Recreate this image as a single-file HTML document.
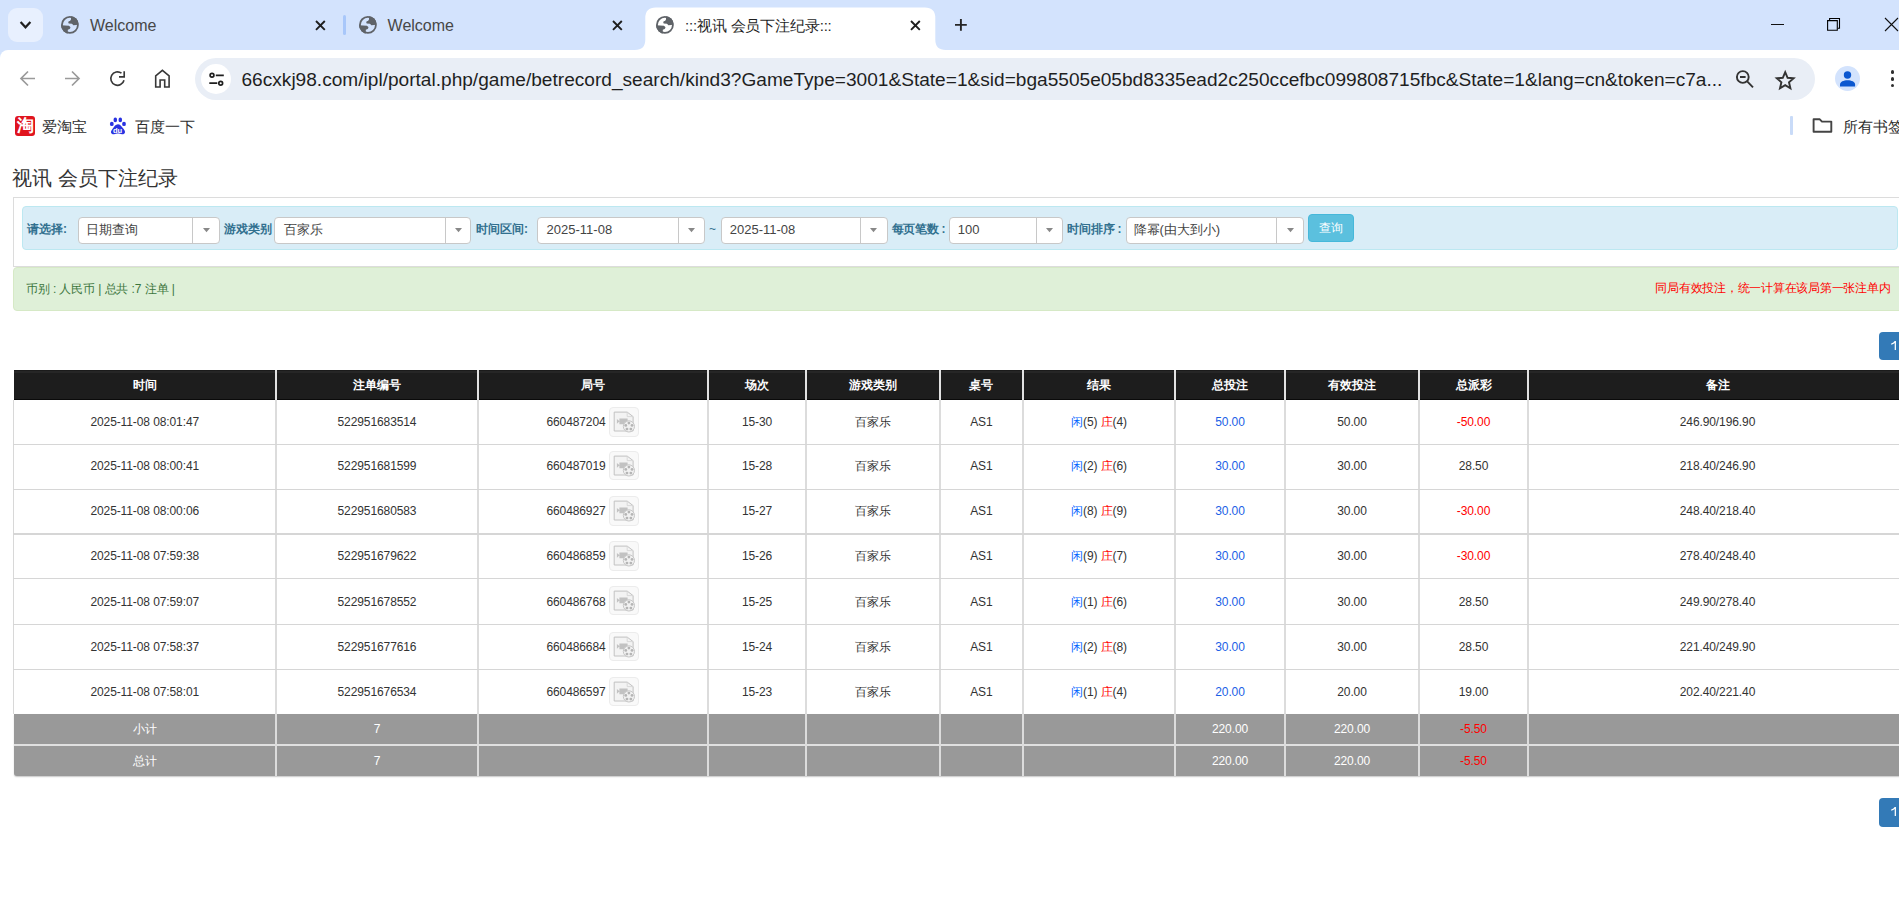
<!DOCTYPE html><html><head><meta charset="utf-8"><title>视讯 会员下注纪录</title><style>
*{margin:0;padding:0;box-sizing:border-box}
html,body{width:1899px;height:918px;overflow:hidden;background:#fff;font-family:"Liberation Sans", sans-serif;}
.a{position:absolute;white-space:nowrap}
.c{text-align:center}
svg{position:absolute;overflow:visible}
</style></head><body><div class="a" style="left:0px;top:0px;width:1899px;height:62px;background:#d3e3fd"></div>
<div class="a" style="left:8px;top:8px;width:34.5px;height:34px;background:#e8f0fe;border-radius:9px"></div>
<svg style="left:0;top:0" width="60" height="50"><path d="M20.6 22 L25.5 27.3 L30.4 22" fill="none" stroke="#1f1f1f" stroke-width="2.2"/></svg>
<svg style="left:61.1px;top:16.1px" width="17.8" height="17.8" viewBox="0 0 17.8 17.8"><defs><clipPath id="gc1"><circle cx="8.9" cy="8.9" r="8.9"/></clipPath></defs><circle cx="8.9" cy="8.9" r="8" fill="none" stroke="#5f6368" stroke-width="1.8"/><g clip-path="url(#gc1)" fill="#5f6368"><path d="M10 0 L10 3.4 Q9.6 5 7.5 5.6 Q6.9 6.8 7.7 7.4 L10.9 7.8 Q11.9 8.4 12.3 9.2 L15.3 9 L18 8.2 L18 0 Z"/><path d="M0 9.3 L7.9 9.8 Q9.5 10.7 9.5 11.7 Q9.2 13.1 6.8 13.8 L6.8 18 L0 18 Z"/></g></svg>
<div class="a" style="left:90px;top:15.3px;font-size:16px;line-height:22px;color:#474747">Welcome</div>
<svg style="left:315.6px;top:20.5px" width="8.8" height="8.8"><path d="M0 0L8.8 8.8M8.8 0L0 8.8" stroke="#1f1f1f" stroke-width="1.9"/></svg>
<div class="a" style="left:343.2px;top:15.2px;width:2.7px;height:20.2px;background:#a8c7fa;border-radius:1.5px"></div>
<svg style="left:359.1px;top:16.1px" width="17.8" height="17.8" viewBox="0 0 17.8 17.8"><defs><clipPath id="gc2"><circle cx="8.9" cy="8.9" r="8.9"/></clipPath></defs><circle cx="8.9" cy="8.9" r="8" fill="none" stroke="#5f6368" stroke-width="1.8"/><g clip-path="url(#gc2)" fill="#5f6368"><path d="M10 0 L10 3.4 Q9.6 5 7.5 5.6 Q6.9 6.8 7.7 7.4 L10.9 7.8 Q11.9 8.4 12.3 9.2 L15.3 9 L18 8.2 L18 0 Z"/><path d="M0 9.3 L7.9 9.8 Q9.5 10.7 9.5 11.7 Q9.2 13.1 6.8 13.8 L6.8 18 L0 18 Z"/></g></svg>
<div class="a" style="left:387.6px;top:15.3px;font-size:16px;line-height:22px;color:#474747">Welcome</div>
<svg style="left:612.9px;top:20.5px" width="8.8" height="8.8"><path d="M0 0L8.8 8.8M8.8 0L0 8.8" stroke="#1f1f1f" stroke-width="1.9"/></svg>
<svg style="left:620px;top:0" width="340" height="50"><path d="M14.8 50 Q25.3 50 25.3 39.5 L25.3 17.9 Q25.3 7.4 35.8 7.4 L304.8 7.4 Q315.3 7.4 315.3 17.9 L315.3 39.5 Q315.3 50 325.8 50 Z" fill="#fff"/></svg>
<svg style="left:656.1px;top:16.1px" width="17.8" height="17.8" viewBox="0 0 17.8 17.8"><defs><clipPath id="gc3"><circle cx="8.9" cy="8.9" r="8.9"/></clipPath></defs><circle cx="8.9" cy="8.9" r="8" fill="none" stroke="#5f6368" stroke-width="1.8"/><g clip-path="url(#gc3)" fill="#5f6368"><path d="M10 0 L10 3.4 Q9.6 5 7.5 5.6 Q6.9 6.8 7.7 7.4 L10.9 7.8 Q11.9 8.4 12.3 9.2 L15.3 9 L18 8.2 L18 0 Z"/><path d="M0 9.3 L7.9 9.8 Q9.5 10.7 9.5 11.7 Q9.2 13.1 6.8 13.8 L6.8 18 L0 18 Z"/></g></svg>
<div class="a" style="left:685px;top:15.3px;font-size:15px;line-height:22px;color:#1f1f1f;letter-spacing:-0.17px">:::视讯 会员下注纪录:::</div>
<svg style="left:910.6px;top:20.5px" width="8.8" height="8.8"><path d="M0 0L8.8 8.8M8.8 0L0 8.8" stroke="#1f1f1f" stroke-width="1.9"/></svg>
<svg style="left:955px;top:19px" width="12" height="12"><path d="M5.9 0V11.8M0 5.85H11.8" stroke="#262626" stroke-width="1.9"/></svg>
<div class="a" style="left:1771px;top:24px;width:13px;height:1.1px;background:#111"></div>
<svg style="left:1826px;top:17px" width="16" height="16"><path d="M1.6 3.6H11.3V13.3H1.6Z" fill="none" stroke="#000" stroke-width="1.1"/><path d="M3.6 3.1V1.5H13.5V11.2H11.8" fill="none" stroke="#000" stroke-width="1.1"/></svg>
<svg style="left:1885px;top:18px" width="14" height="14"><path d="M0 0L13 13M13 0L0 13" stroke="#111" stroke-width="1.1"/></svg>
<div class="a" style="left:0px;top:50px;width:1899px;height:58px;background:#fff;border-top-left-radius:8px"></div>
<svg style="left:0;top:50px" width="200" height="58"><path d="M35 28.5H21.5M28 21.5L21 28.5L28 35.5" fill="none" stroke="#9a9a9a" stroke-width="1.7"/><path d="M65 28.5H78.5M72 21.5L79 28.5L72 35.5" fill="none" stroke="#9a9a9a" stroke-width="1.7"/><path d="M124 30.2 A6.7 6.7 0 1 1 121.5 23.2" fill="none" stroke="#383838" stroke-width="1.65"/><path d="M124.2 21.2V26.8H119" fill="none" stroke="#383838" stroke-width="1.65"/><path d="M155.7 37V25.8L162.4 20.4L169.1 25.8V37H164.7V30H160.1V37Z" fill="none" stroke="#383838" stroke-width="1.6" stroke-linejoin="miter"/></svg>
<div class="a" style="left:195px;top:58px;width:1620px;height:42px;background:#e9eef6;border-radius:21px"></div>
<div class="a" style="left:201px;top:64px;width:30px;height:30px;background:#fff;border-radius:50%"></div>
<svg style="left:200px;top:64px" width="32" height="30"><circle cx="12" cy="11.3" r="1.9" fill="none" stroke="#1f1f1f" stroke-width="1.7"/><path d="M15.8 11.3H23.8M9.3 19.2H17.3" stroke="#1f1f1f" stroke-width="1.8"/><circle cx="20.7" cy="19.2" r="1.9" fill="none" stroke="#1f1f1f" stroke-width="1.7"/></svg>
<div class="a" style="left:241.5px;top:67px;font-size:19.1px;line-height:26px;color:#1f1f1f">66cxkj98.com/ipl/portal.php/game/betrecord_search/kind3?GameType=3001&amp;State=1&amp;sid=bga5505e05bd8335ead2c250ccefbc099808715fbc&amp;State=1&amp;lang=cn&amp;token=c7a...</div>
<svg style="left:1730px;top:64px" width="30" height="30"><circle cx="12.8" cy="13" r="5.9" fill="none" stroke="#333" stroke-width="1.9"/><path d="M10 13H15.6M17.2 17.4L23 23.4" stroke="#333" stroke-width="1.9"/></svg>
<svg style="left:1770px;top:64.8px" width="30" height="30"><path d="M15.2 7.2L17.6 12.8L23.6 13.3L19 17.3L20.4 23.2L15.2 20.1L10 23.2L11.4 17.3L6.8 13.3L12.8 12.8Z" fill="none" stroke="#333" stroke-width="1.9" stroke-linejoin="miter"/></svg>
<div class="a" style="left:1835px;top:65.5px;width:25.4px;height:25.4px;background:#d3e3fd;border-radius:50%"></div>
<svg style="left:1835px;top:65.5px" width="26" height="26"><circle cx="12.5" cy="9" r="3.7" fill="#0b57d0"/><path d="M5 20.4V18.4C5 15.9 8.5 14.3 12.55 14.3C16.6 14.3 20.1 15.9 20.1 18.4V20.4Z" fill="#0b57d0"/></svg>
<div class="a" style="left:1890.7px;top:70.1px;width:3.8px;height:3.8px;background:#2f2f2f;border-radius:50%"></div>
<div class="a" style="left:1890.7px;top:76.89999999999999px;width:3.8px;height:3.8px;background:#2f2f2f;border-radius:50%"></div>
<div class="a" style="left:1890.7px;top:83.69999999999999px;width:3.8px;height:3.8px;background:#2f2f2f;border-radius:50%"></div>
<div class="a" style="left:15px;top:116px;width:20px;height:20px;background:#e0141e;border-radius:3px;color:#fff;font-size:17px;line-height:20px;text-align:center;font-weight:bold">淘</div>
<div class="a" style="left:42px;top:117px;font-size:15px;line-height:20px;color:#2d2d2d">爱淘宝</div>
<svg style="left:104px;top:112px" width="28" height="28"><g fill="#2932e1"><ellipse cx="11.3" cy="7.9" rx="1.8" ry="2.4"/><ellipse cx="16.3" cy="7.9" rx="1.8" ry="2.4"/><ellipse cx="7.8" cy="11.9" rx="1.9" ry="2.2"/><ellipse cx="20" cy="11.9" rx="1.9" ry="2.2"/><path d="M13.9 12.2C11.7 12.2 10.2 14.5 9 16.2C7.8 17.8 6.8 19 7 20.5C7.2 21.8 8.5 22.4 10 22.3C11.5 22.2 12.5 21.6 14 21.6C15.5 21.6 16.5 22.3 18 22.3C19.8 22.3 21 21.5 21 20C21 18.5 20 17.5 18.8 16C17.5 14.4 16.1 12.2 13.9 12.2Z"/></g><text x="13.6" y="20.6" font-size="7.6" fill="#fff" text-anchor="middle" font-family="Liberation Sans" font-weight="bold">du</text></svg>
<div class="a" style="left:135px;top:117px;font-size:15px;line-height:20px;color:#2d2d2d">百度一下</div>
<div class="a" style="left:1790.4px;top:116px;width:2.2px;height:19px;background:#c9dbf8;border-radius:1px"></div>
<svg style="left:1810px;top:116px" width="26" height="20"><path d="M3.6 3.3H9.8L12 5.6H21.3V15.7H3.6Z" fill="none" stroke="#444" stroke-width="1.9" stroke-linejoin="round"/></svg>
<div class="a" style="left:1843px;top:117px;font-size:15px;line-height:20px;color:#2d2d2d">所有书签</div>
<div class="a" style="left:12.4px;top:164px;font-size:20px;line-height:28px;color:#333">视讯 会员下注纪录</div>
<div class="a" style="left:13px;top:197px;width:1950px;height:70px;border:1px solid #dcdcdc;background:#fff"></div>
<div class="a" style="left:22px;top:206.3px;width:1875.5px;height:43.5px;background:#d9edf7;border:1px solid #bce8f1;border-radius:4px"></div>
<div class="a" style="left:27px;top:221px;font-size:12px;line-height:17px;color:#31708f;font-weight:bold">请选择:</div>
<div class="a" style="left:77.5px;top:216.5px;width:142.1px;height:27px;background:#fff;border:1px solid #c8c8c8;border-radius:4px"></div>
<div class="a" style="left:192.4px;top:217.5px;width:1px;height:25px;background:#c8c8c8"></div>
<svg style="left:202.5px;top:227.5px" width="7" height="5"><path d="M0 0H7L3.5 4.2Z" fill="#888"/></svg>
<div class="a" style="left:85.5px;top:221px;font-size:13px;line-height:17px;color:#444">日期查询</div>
<div class="a" style="left:223.5px;top:221px;font-size:12px;line-height:17px;color:#31708f;font-weight:bold">游戏类别</div>
<div class="a" style="left:274.3px;top:216.5px;width:197.2px;height:27px;background:#fff;border:1px solid #c8c8c8;border-radius:4px"></div>
<div class="a" style="left:444.5px;top:217.5px;width:1px;height:25px;background:#c8c8c8"></div>
<svg style="left:454.5px;top:227.5px" width="7" height="5"><path d="M0 0H7L3.5 4.2Z" fill="#888"/></svg>
<div class="a" style="left:284.1px;top:221px;font-size:13px;line-height:17px;color:#444">百家乐</div>
<div class="a" style="left:476px;top:221px;font-size:12px;line-height:17px;color:#31708f;font-weight:bold">时间区间:</div>
<div class="a" style="left:537.4px;top:216.5px;width:168.0px;height:27px;background:#fff;border:1px solid #c8c8c8;border-radius:4px"></div>
<div class="a" style="left:677.5px;top:217.5px;width:1px;height:25px;background:#c8c8c8"></div>
<svg style="left:687.95px;top:227.5px" width="7" height="5"><path d="M0 0H7L3.5 4.2Z" fill="#888"/></svg>
<div class="a" style="left:546.6px;top:221px;font-size:13px;line-height:17px;color:#444">2025-11-08</div>
<div class="a" style="left:709px;top:221px;font-size:12px;line-height:17px;color:#31708f">~</div>
<div class="a" style="left:720.6px;top:216.5px;width:167.0px;height:27px;background:#fff;border:1px solid #c8c8c8;border-radius:4px"></div>
<div class="a" style="left:859.7px;top:217.5px;width:1px;height:25px;background:#c8c8c8"></div>
<svg style="left:870.1500000000001px;top:227.5px" width="7" height="5"><path d="M0 0H7L3.5 4.2Z" fill="#888"/></svg>
<div class="a" style="left:729.8000000000001px;top:221px;font-size:13px;line-height:17px;color:#444">2025-11-08</div>
<div class="a" style="left:891.5px;top:221px;font-size:12px;line-height:17px;color:#31708f;font-weight:bold;letter-spacing:-0.25px">每页笔数 :</div>
<div class="a" style="left:948.5px;top:216.5px;width:114.79999999999995px;height:27px;background:#fff;border:1px solid #c8c8c8;border-radius:4px"></div>
<div class="a" style="left:1035.7px;top:217.5px;width:1px;height:25px;background:#c8c8c8"></div>
<svg style="left:1046.0px;top:227.5px" width="7" height="5"><path d="M0 0H7L3.5 4.2Z" fill="#888"/></svg>
<div class="a" style="left:957.7px;top:221px;font-size:13px;line-height:17px;color:#444">100</div>
<div class="a" style="left:1067.3px;top:221px;font-size:12px;line-height:17px;color:#31708f;font-weight:bold;letter-spacing:-0.25px">时间排序 :</div>
<div class="a" style="left:1125.5px;top:216.5px;width:178.9000000000001px;height:27px;background:#fff;border:1px solid #c8c8c8;border-radius:4px"></div>
<div class="a" style="left:1276.3px;top:217.5px;width:1px;height:25px;background:#c8c8c8"></div>
<svg style="left:1286.85px;top:227.5px" width="7" height="5"><path d="M0 0H7L3.5 4.2Z" fill="#888"/></svg>
<div class="a" style="left:1133.5px;top:221px;font-size:13px;line-height:17px;color:#444">降幂(由大到小)</div>
<div class="a" style="left:1308.1px;top:214px;width:45.6px;height:28px;background:#5bc0de;border:1px solid #46b8da;border-radius:4px;color:#fff;font-size:12px;line-height:26px;text-align:center">查询</div>
<div class="a" style="left:13px;top:267px;width:1950px;height:43.5px;background:#dff0d8;border:1px solid #d6e9c6;border-radius:4px"></div>
<div class="a" style="left:25.9px;top:281px;font-size:12px;line-height:17px;color:#3c763d;letter-spacing:-0.17px;letter-spacing:-0.1px">币别 : 人民币 | 总共 :7 注单 |</div>
<div class="a" style="left:1500px;top:280px;width:390.3px;font-size:12px;line-height:17px;color:#f00;text-align:right;letter-spacing:-0.25px">同局有效投注，统一计算在该局第一张注单内</div>
<div class="a" style="left:1879px;top:332px;width:60px;height:27.9px;background:#337ab7;border-radius:4px 0 0 4px"><svg style="left:12px;top:9px" width="6" height="10"><path d="M3.7 0H4.95V8.9H3.7V1.9Q2.5 3.0 0.2 3.7V2.5Q2.7 1.5 3.7 0Z" fill="#fff"/></svg></div>
<div class="a" style="left:1879px;top:798.3px;width:60px;height:28.4px;background:#337ab7;border-radius:4px 0 0 4px"><svg style="left:12px;top:9px" width="6" height="10"><path d="M3.7 0H4.95V8.9H3.7V1.9Q2.5 3.0 0.2 3.7V2.5Q2.7 1.5 3.7 0Z" fill="#fff"/></svg></div>
<div class="a" style="left:14px;top:370px;width:1885px;height:30px;background:linear-gradient(#1b1b1b 0,#1b1b1b 1px,#262626 1px,#262626 3px,#1d1d1d 3px);border-bottom:1px solid #0a0a0a"></div>
<div class="a" style="left:274.8px;top:370px;width:2.4px;height:30px;background:#e2e2e2"></div>
<div class="a" style="left:476.8px;top:370px;width:2.4px;height:30px;background:#e2e2e2"></div>
<div class="a" style="left:706.8px;top:370px;width:2.4px;height:30px;background:#e2e2e2"></div>
<div class="a" style="left:804.8px;top:370px;width:2.4px;height:30px;background:#e2e2e2"></div>
<div class="a" style="left:938.5px;top:370px;width:2.4px;height:30px;background:#e2e2e2"></div>
<div class="a" style="left:1021.8px;top:370px;width:2.4px;height:30px;background:#e2e2e2"></div>
<div class="a" style="left:1173.8px;top:370px;width:2.4px;height:30px;background:#e2e2e2"></div>
<div class="a" style="left:1283.8px;top:370px;width:2.4px;height:30px;background:#e2e2e2"></div>
<div class="a" style="left:1417.8px;top:370px;width:2.4px;height:30px;background:#e2e2e2"></div>
<div class="a" style="left:1526.8px;top:370px;width:2.4px;height:30px;background:#e2e2e2"></div>
<div class="a c" style="left:13.5px;top:371px;width:262.5px;font-size:12px;line-height:29px;color:#fff;font-weight:bold">时间</div>
<div class="a c" style="left:276px;top:371px;width:202px;font-size:12px;line-height:29px;color:#fff;font-weight:bold">注单编号</div>
<div class="a c" style="left:478px;top:371px;width:230px;font-size:12px;line-height:29px;color:#fff;font-weight:bold">局号</div>
<div class="a c" style="left:708px;top:371px;width:98px;font-size:12px;line-height:29px;color:#fff;font-weight:bold">场次</div>
<div class="a c" style="left:806px;top:371px;width:133.70000000000005px;font-size:12px;line-height:29px;color:#fff;font-weight:bold">游戏类别</div>
<div class="a c" style="left:939.7px;top:371px;width:83.29999999999995px;font-size:12px;line-height:29px;color:#fff;font-weight:bold">桌号</div>
<div class="a c" style="left:1023px;top:371px;width:152px;font-size:12px;line-height:29px;color:#fff;font-weight:bold">结果</div>
<div class="a c" style="left:1175px;top:371px;width:110px;font-size:12px;line-height:29px;color:#fff;font-weight:bold">总投注</div>
<div class="a c" style="left:1285px;top:371px;width:134px;font-size:12px;line-height:29px;color:#fff;font-weight:bold">有效投注</div>
<div class="a c" style="left:1419px;top:371px;width:109px;font-size:12px;line-height:29px;color:#fff;font-weight:bold">总派彩</div>
<div class="a c" style="left:1528px;top:371px;width:379px;font-size:12px;line-height:29px;color:#fff;font-weight:bold">备注</div>
<div class="a" style="left:13px;top:400px;width:1px;height:313.70000000000005px;background:#d8d8d8"></div>
<div class="a" style="left:275px;top:400px;width:2px;height:313.70000000000005px;background:#dcdcdc"></div>
<div class="a" style="left:477px;top:400px;width:2px;height:313.70000000000005px;background:#dcdcdc"></div>
<div class="a" style="left:707px;top:400px;width:2px;height:313.70000000000005px;background:#dcdcdc"></div>
<div class="a" style="left:805px;top:400px;width:2px;height:313.70000000000005px;background:#dcdcdc"></div>
<div class="a" style="left:938.7px;top:400px;width:2px;height:313.70000000000005px;background:#dcdcdc"></div>
<div class="a" style="left:1022px;top:400px;width:2px;height:313.70000000000005px;background:#dcdcdc"></div>
<div class="a" style="left:1174px;top:400px;width:2px;height:313.70000000000005px;background:#dcdcdc"></div>
<div class="a" style="left:1284px;top:400px;width:2px;height:313.70000000000005px;background:#dcdcdc"></div>
<div class="a" style="left:1418px;top:400px;width:2px;height:313.70000000000005px;background:#dcdcdc"></div>
<div class="a" style="left:1527px;top:400px;width:2px;height:313.70000000000005px;background:#dcdcdc"></div>
<div class="a" style="left:13px;top:443.9px;width:1886px;height:1.3px;background:#d6d6d6"></div>
<div class="a" style="left:13px;top:488.59999999999997px;width:1886px;height:1.3px;background:#d6d6d6"></div>
<div class="a" style="left:13px;top:533.4px;width:1886px;height:1.3px;background:#d6d6d6"></div>
<div class="a" style="left:13px;top:578.0px;width:1886px;height:1.3px;background:#d6d6d6"></div>
<div class="a" style="left:13px;top:624.1px;width:1886px;height:1.3px;background:#d6d6d6"></div>
<div class="a" style="left:13px;top:668.9px;width:1886px;height:1.3px;background:#d6d6d6"></div>
<div class="a c" style="left:13.5px;top:400px;width:262.5px;font-size:12px;line-height:44.5px;color:#333;letter-spacing:-0.1px">2025-11-08 08:01:47</div>
<div class="a c" style="left:276px;top:400px;width:202px;font-size:12px;line-height:44.5px;color:#333;letter-spacing:-0.1px">522951683514</div>
<div class="a" style="left:478px;top:400px;width:127.60000000000002px;font-size:12px;line-height:44.5px;color:#333;text-align:right;letter-spacing:-0.1px">660487204</div>
<div class="a" style="left:609.2px;top:407.1px;width:29.5px;height:29.5px;background:#f9f9f9;border:1px solid #ececec;border-radius:4px"><svg width="29.5" height="29.5" viewBox="0 0 29.5 29.5" style="position:absolute;left:-1px;top:-1px"><path d="M5.2 5.1H18.2L24.1 9.6V24H5.2Z" fill="#f3f3f3" stroke="#c2c2c2" stroke-width="1"/><path d="M18.2 5.1V9.6H24.1" fill="none" stroke="#d5d5d5" stroke-width="0.9"/><path d="M10.4 11.5H18.6V17.2H10.4Z M7.9 11.9L10.6 14.35L7.9 16.8Z" fill="#c2c2c2"/><circle cx="19.9" cy="19.4" r="5.6" fill="#f1f1f1" stroke="#c6c6c6" stroke-width="1"/><circle cx="19.90" cy="16.10" r="1.4" fill="#b5b5b5"/><circle cx="23.04" cy="18.38" r="1.4" fill="#b5b5b5"/><circle cx="21.84" cy="22.07" r="1.4" fill="#b5b5b5"/><circle cx="17.96" cy="22.07" r="1.4" fill="#b5b5b5"/><circle cx="16.76" cy="18.38" r="1.4" fill="#b5b5b5"/></svg></div>
<div class="a c" style="left:708px;top:400px;width:98px;font-size:12px;line-height:44.5px;color:#333;letter-spacing:-0.1px">15-30</div>
<div class="a c" style="left:806px;top:400px;width:133.70000000000005px;font-size:12px;line-height:44.5px;color:#333">百家乐</div>
<div class="a c" style="left:939.7px;top:400px;width:83.29999999999995px;font-size:12px;line-height:44.5px;color:#333;letter-spacing:-0.1px">AS1</div>
<div class="a c" style="left:1023px;top:400px;width:152px;font-size:12px;line-height:44.5px;color:#333;letter-spacing:-0.1px"><span style="color:#0063ff">闲</span>(5) <span style="color:#f00">庄</span>(4)</div>
<div class="a c" style="left:1175px;top:400px;width:110px;font-size:12px;line-height:44.5px;color:#1c5fe6;letter-spacing:-0.1px">50.00</div>
<div class="a c" style="left:1285px;top:400px;width:134px;font-size:12px;line-height:44.5px;color:#333;letter-spacing:-0.1px">50.00</div>
<div class="a c" style="left:1419px;top:400px;width:109px;font-size:12px;line-height:44.5px;color:#f00;letter-spacing:-0.1px">-50.00</div>
<div class="a c" style="left:1528px;top:400px;width:379px;font-size:12px;line-height:44.5px;color:#333;letter-spacing:-0.1px">246.90/196.90</div>
<div class="a c" style="left:13.5px;top:443.8px;width:262.5px;font-size:12px;line-height:44.69999999999999px;color:#333;letter-spacing:-0.1px">2025-11-08 08:00:41</div>
<div class="a c" style="left:276px;top:443.8px;width:202px;font-size:12px;line-height:44.69999999999999px;color:#333;letter-spacing:-0.1px">522951681599</div>
<div class="a" style="left:478px;top:443.8px;width:127.60000000000002px;font-size:12px;line-height:44.69999999999999px;color:#333;text-align:right;letter-spacing:-0.1px">660487019</div>
<div class="a" style="left:609.2px;top:450.90000000000003px;width:29.5px;height:29.5px;background:#f9f9f9;border:1px solid #ececec;border-radius:4px"><svg width="29.5" height="29.5" viewBox="0 0 29.5 29.5" style="position:absolute;left:-1px;top:-1px"><path d="M5.2 5.1H18.2L24.1 9.6V24H5.2Z" fill="#f3f3f3" stroke="#c2c2c2" stroke-width="1"/><path d="M18.2 5.1V9.6H24.1" fill="none" stroke="#d5d5d5" stroke-width="0.9"/><path d="M10.4 11.5H18.6V17.2H10.4Z M7.9 11.9L10.6 14.35L7.9 16.8Z" fill="#c2c2c2"/><circle cx="19.9" cy="19.4" r="5.6" fill="#f1f1f1" stroke="#c6c6c6" stroke-width="1"/><circle cx="19.90" cy="16.10" r="1.4" fill="#b5b5b5"/><circle cx="23.04" cy="18.38" r="1.4" fill="#b5b5b5"/><circle cx="21.84" cy="22.07" r="1.4" fill="#b5b5b5"/><circle cx="17.96" cy="22.07" r="1.4" fill="#b5b5b5"/><circle cx="16.76" cy="18.38" r="1.4" fill="#b5b5b5"/></svg></div>
<div class="a c" style="left:708px;top:443.8px;width:98px;font-size:12px;line-height:44.69999999999999px;color:#333;letter-spacing:-0.1px">15-28</div>
<div class="a c" style="left:806px;top:443.8px;width:133.70000000000005px;font-size:12px;line-height:44.69999999999999px;color:#333">百家乐</div>
<div class="a c" style="left:939.7px;top:443.8px;width:83.29999999999995px;font-size:12px;line-height:44.69999999999999px;color:#333;letter-spacing:-0.1px">AS1</div>
<div class="a c" style="left:1023px;top:443.8px;width:152px;font-size:12px;line-height:44.69999999999999px;color:#333;letter-spacing:-0.1px"><span style="color:#0063ff">闲</span>(2) <span style="color:#f00">庄</span>(6)</div>
<div class="a c" style="left:1175px;top:443.8px;width:110px;font-size:12px;line-height:44.69999999999999px;color:#1c5fe6;letter-spacing:-0.1px">30.00</div>
<div class="a c" style="left:1285px;top:443.8px;width:134px;font-size:12px;line-height:44.69999999999999px;color:#333;letter-spacing:-0.1px">30.00</div>
<div class="a c" style="left:1419px;top:443.8px;width:109px;font-size:12px;line-height:44.69999999999999px;color:#333;letter-spacing:-0.1px">28.50</div>
<div class="a c" style="left:1528px;top:443.8px;width:379px;font-size:12px;line-height:44.69999999999999px;color:#333;letter-spacing:-0.1px">218.40/246.90</div>
<div class="a c" style="left:13.5px;top:489.2px;width:262.5px;font-size:12px;line-height:44.80000000000001px;color:#333;letter-spacing:-0.1px">2025-11-08 08:00:06</div>
<div class="a c" style="left:276px;top:489.2px;width:202px;font-size:12px;line-height:44.80000000000001px;color:#333;letter-spacing:-0.1px">522951680583</div>
<div class="a" style="left:478px;top:489.2px;width:127.60000000000002px;font-size:12px;line-height:44.80000000000001px;color:#333;text-align:right;letter-spacing:-0.1px">660486927</div>
<div class="a" style="left:609.2px;top:496.3px;width:29.5px;height:29.5px;background:#f9f9f9;border:1px solid #ececec;border-radius:4px"><svg width="29.5" height="29.5" viewBox="0 0 29.5 29.5" style="position:absolute;left:-1px;top:-1px"><path d="M5.2 5.1H18.2L24.1 9.6V24H5.2Z" fill="#f3f3f3" stroke="#c2c2c2" stroke-width="1"/><path d="M18.2 5.1V9.6H24.1" fill="none" stroke="#d5d5d5" stroke-width="0.9"/><path d="M10.4 11.5H18.6V17.2H10.4Z M7.9 11.9L10.6 14.35L7.9 16.8Z" fill="#c2c2c2"/><circle cx="19.9" cy="19.4" r="5.6" fill="#f1f1f1" stroke="#c6c6c6" stroke-width="1"/><circle cx="19.90" cy="16.10" r="1.4" fill="#b5b5b5"/><circle cx="23.04" cy="18.38" r="1.4" fill="#b5b5b5"/><circle cx="21.84" cy="22.07" r="1.4" fill="#b5b5b5"/><circle cx="17.96" cy="22.07" r="1.4" fill="#b5b5b5"/><circle cx="16.76" cy="18.38" r="1.4" fill="#b5b5b5"/></svg></div>
<div class="a c" style="left:708px;top:489.2px;width:98px;font-size:12px;line-height:44.80000000000001px;color:#333;letter-spacing:-0.1px">15-27</div>
<div class="a c" style="left:806px;top:489.2px;width:133.70000000000005px;font-size:12px;line-height:44.80000000000001px;color:#333">百家乐</div>
<div class="a c" style="left:939.7px;top:489.2px;width:83.29999999999995px;font-size:12px;line-height:44.80000000000001px;color:#333;letter-spacing:-0.1px">AS1</div>
<div class="a c" style="left:1023px;top:489.2px;width:152px;font-size:12px;line-height:44.80000000000001px;color:#333;letter-spacing:-0.1px"><span style="color:#0063ff">闲</span>(8) <span style="color:#f00">庄</span>(9)</div>
<div class="a c" style="left:1175px;top:489.2px;width:110px;font-size:12px;line-height:44.80000000000001px;color:#1c5fe6;letter-spacing:-0.1px">30.00</div>
<div class="a c" style="left:1285px;top:489.2px;width:134px;font-size:12px;line-height:44.80000000000001px;color:#333;letter-spacing:-0.1px">30.00</div>
<div class="a c" style="left:1419px;top:489.2px;width:109px;font-size:12px;line-height:44.80000000000001px;color:#f00;letter-spacing:-0.1px">-30.00</div>
<div class="a c" style="left:1528px;top:489.2px;width:379px;font-size:12px;line-height:44.80000000000001px;color:#333;letter-spacing:-0.1px">248.40/218.40</div>
<div class="a c" style="left:13.5px;top:534px;width:262.5px;font-size:12px;line-height:44.60000000000002px;color:#333;letter-spacing:-0.1px">2025-11-08 07:59:38</div>
<div class="a c" style="left:276px;top:534px;width:202px;font-size:12px;line-height:44.60000000000002px;color:#333;letter-spacing:-0.1px">522951679622</div>
<div class="a" style="left:478px;top:534px;width:127.60000000000002px;font-size:12px;line-height:44.60000000000002px;color:#333;text-align:right;letter-spacing:-0.1px">660486859</div>
<div class="a" style="left:609.2px;top:541.1px;width:29.5px;height:29.5px;background:#f9f9f9;border:1px solid #ececec;border-radius:4px"><svg width="29.5" height="29.5" viewBox="0 0 29.5 29.5" style="position:absolute;left:-1px;top:-1px"><path d="M5.2 5.1H18.2L24.1 9.6V24H5.2Z" fill="#f3f3f3" stroke="#c2c2c2" stroke-width="1"/><path d="M18.2 5.1V9.6H24.1" fill="none" stroke="#d5d5d5" stroke-width="0.9"/><path d="M10.4 11.5H18.6V17.2H10.4Z M7.9 11.9L10.6 14.35L7.9 16.8Z" fill="#c2c2c2"/><circle cx="19.9" cy="19.4" r="5.6" fill="#f1f1f1" stroke="#c6c6c6" stroke-width="1"/><circle cx="19.90" cy="16.10" r="1.4" fill="#b5b5b5"/><circle cx="23.04" cy="18.38" r="1.4" fill="#b5b5b5"/><circle cx="21.84" cy="22.07" r="1.4" fill="#b5b5b5"/><circle cx="17.96" cy="22.07" r="1.4" fill="#b5b5b5"/><circle cx="16.76" cy="18.38" r="1.4" fill="#b5b5b5"/></svg></div>
<div class="a c" style="left:708px;top:534px;width:98px;font-size:12px;line-height:44.60000000000002px;color:#333;letter-spacing:-0.1px">15-26</div>
<div class="a c" style="left:806px;top:534px;width:133.70000000000005px;font-size:12px;line-height:44.60000000000002px;color:#333">百家乐</div>
<div class="a c" style="left:939.7px;top:534px;width:83.29999999999995px;font-size:12px;line-height:44.60000000000002px;color:#333;letter-spacing:-0.1px">AS1</div>
<div class="a c" style="left:1023px;top:534px;width:152px;font-size:12px;line-height:44.60000000000002px;color:#333;letter-spacing:-0.1px"><span style="color:#0063ff">闲</span>(9) <span style="color:#f00">庄</span>(7)</div>
<div class="a c" style="left:1175px;top:534px;width:110px;font-size:12px;line-height:44.60000000000002px;color:#1c5fe6;letter-spacing:-0.1px">30.00</div>
<div class="a c" style="left:1285px;top:534px;width:134px;font-size:12px;line-height:44.60000000000002px;color:#333;letter-spacing:-0.1px">30.00</div>
<div class="a c" style="left:1419px;top:534px;width:109px;font-size:12px;line-height:44.60000000000002px;color:#f00;letter-spacing:-0.1px">-30.00</div>
<div class="a c" style="left:1528px;top:534px;width:379px;font-size:12px;line-height:44.60000000000002px;color:#333;letter-spacing:-0.1px">278.40/248.40</div>
<div class="a c" style="left:13.5px;top:578.6px;width:262.5px;font-size:12px;line-height:46.10000000000002px;color:#333;letter-spacing:-0.1px">2025-11-08 07:59:07</div>
<div class="a c" style="left:276px;top:578.6px;width:202px;font-size:12px;line-height:46.10000000000002px;color:#333;letter-spacing:-0.1px">522951678552</div>
<div class="a" style="left:478px;top:578.6px;width:127.60000000000002px;font-size:12px;line-height:46.10000000000002px;color:#333;text-align:right;letter-spacing:-0.1px">660486768</div>
<div class="a" style="left:609.2px;top:585.7px;width:29.5px;height:29.5px;background:#f9f9f9;border:1px solid #ececec;border-radius:4px"><svg width="29.5" height="29.5" viewBox="0 0 29.5 29.5" style="position:absolute;left:-1px;top:-1px"><path d="M5.2 5.1H18.2L24.1 9.6V24H5.2Z" fill="#f3f3f3" stroke="#c2c2c2" stroke-width="1"/><path d="M18.2 5.1V9.6H24.1" fill="none" stroke="#d5d5d5" stroke-width="0.9"/><path d="M10.4 11.5H18.6V17.2H10.4Z M7.9 11.9L10.6 14.35L7.9 16.8Z" fill="#c2c2c2"/><circle cx="19.9" cy="19.4" r="5.6" fill="#f1f1f1" stroke="#c6c6c6" stroke-width="1"/><circle cx="19.90" cy="16.10" r="1.4" fill="#b5b5b5"/><circle cx="23.04" cy="18.38" r="1.4" fill="#b5b5b5"/><circle cx="21.84" cy="22.07" r="1.4" fill="#b5b5b5"/><circle cx="17.96" cy="22.07" r="1.4" fill="#b5b5b5"/><circle cx="16.76" cy="18.38" r="1.4" fill="#b5b5b5"/></svg></div>
<div class="a c" style="left:708px;top:578.6px;width:98px;font-size:12px;line-height:46.10000000000002px;color:#333;letter-spacing:-0.1px">15-25</div>
<div class="a c" style="left:806px;top:578.6px;width:133.70000000000005px;font-size:12px;line-height:46.10000000000002px;color:#333">百家乐</div>
<div class="a c" style="left:939.7px;top:578.6px;width:83.29999999999995px;font-size:12px;line-height:46.10000000000002px;color:#333;letter-spacing:-0.1px">AS1</div>
<div class="a c" style="left:1023px;top:578.6px;width:152px;font-size:12px;line-height:46.10000000000002px;color:#333;letter-spacing:-0.1px"><span style="color:#0063ff">闲</span>(1) <span style="color:#f00">庄</span>(6)</div>
<div class="a c" style="left:1175px;top:578.6px;width:110px;font-size:12px;line-height:46.10000000000002px;color:#1c5fe6;letter-spacing:-0.1px">30.00</div>
<div class="a c" style="left:1285px;top:578.6px;width:134px;font-size:12px;line-height:46.10000000000002px;color:#333;letter-spacing:-0.1px">30.00</div>
<div class="a c" style="left:1419px;top:578.6px;width:109px;font-size:12px;line-height:46.10000000000002px;color:#333;letter-spacing:-0.1px">28.50</div>
<div class="a c" style="left:1528px;top:578.6px;width:379px;font-size:12px;line-height:46.10000000000002px;color:#333;letter-spacing:-0.1px">249.90/278.40</div>
<div class="a c" style="left:13.5px;top:624.7px;width:262.5px;font-size:12px;line-height:44.799999999999955px;color:#333;letter-spacing:-0.1px">2025-11-08 07:58:37</div>
<div class="a c" style="left:276px;top:624.7px;width:202px;font-size:12px;line-height:44.799999999999955px;color:#333;letter-spacing:-0.1px">522951677616</div>
<div class="a" style="left:478px;top:624.7px;width:127.60000000000002px;font-size:12px;line-height:44.799999999999955px;color:#333;text-align:right;letter-spacing:-0.1px">660486684</div>
<div class="a" style="left:609.2px;top:631.8000000000001px;width:29.5px;height:29.5px;background:#f9f9f9;border:1px solid #ececec;border-radius:4px"><svg width="29.5" height="29.5" viewBox="0 0 29.5 29.5" style="position:absolute;left:-1px;top:-1px"><path d="M5.2 5.1H18.2L24.1 9.6V24H5.2Z" fill="#f3f3f3" stroke="#c2c2c2" stroke-width="1"/><path d="M18.2 5.1V9.6H24.1" fill="none" stroke="#d5d5d5" stroke-width="0.9"/><path d="M10.4 11.5H18.6V17.2H10.4Z M7.9 11.9L10.6 14.35L7.9 16.8Z" fill="#c2c2c2"/><circle cx="19.9" cy="19.4" r="5.6" fill="#f1f1f1" stroke="#c6c6c6" stroke-width="1"/><circle cx="19.90" cy="16.10" r="1.4" fill="#b5b5b5"/><circle cx="23.04" cy="18.38" r="1.4" fill="#b5b5b5"/><circle cx="21.84" cy="22.07" r="1.4" fill="#b5b5b5"/><circle cx="17.96" cy="22.07" r="1.4" fill="#b5b5b5"/><circle cx="16.76" cy="18.38" r="1.4" fill="#b5b5b5"/></svg></div>
<div class="a c" style="left:708px;top:624.7px;width:98px;font-size:12px;line-height:44.799999999999955px;color:#333;letter-spacing:-0.1px">15-24</div>
<div class="a c" style="left:806px;top:624.7px;width:133.70000000000005px;font-size:12px;line-height:44.799999999999955px;color:#333">百家乐</div>
<div class="a c" style="left:939.7px;top:624.7px;width:83.29999999999995px;font-size:12px;line-height:44.799999999999955px;color:#333;letter-spacing:-0.1px">AS1</div>
<div class="a c" style="left:1023px;top:624.7px;width:152px;font-size:12px;line-height:44.799999999999955px;color:#333;letter-spacing:-0.1px"><span style="color:#0063ff">闲</span>(2) <span style="color:#f00">庄</span>(8)</div>
<div class="a c" style="left:1175px;top:624.7px;width:110px;font-size:12px;line-height:44.799999999999955px;color:#1c5fe6;letter-spacing:-0.1px">30.00</div>
<div class="a c" style="left:1285px;top:624.7px;width:134px;font-size:12px;line-height:44.799999999999955px;color:#333;letter-spacing:-0.1px">30.00</div>
<div class="a c" style="left:1419px;top:624.7px;width:109px;font-size:12px;line-height:44.799999999999955px;color:#333;letter-spacing:-0.1px">28.50</div>
<div class="a c" style="left:1528px;top:624.7px;width:379px;font-size:12px;line-height:44.799999999999955px;color:#333;letter-spacing:-0.1px">221.40/249.90</div>
<div class="a c" style="left:13.5px;top:669.5px;width:262.5px;font-size:12px;line-height:44.200000000000045px;color:#333;letter-spacing:-0.1px">2025-11-08 07:58:01</div>
<div class="a c" style="left:276px;top:669.5px;width:202px;font-size:12px;line-height:44.200000000000045px;color:#333;letter-spacing:-0.1px">522951676534</div>
<div class="a" style="left:478px;top:669.5px;width:127.60000000000002px;font-size:12px;line-height:44.200000000000045px;color:#333;text-align:right;letter-spacing:-0.1px">660486597</div>
<div class="a" style="left:609.2px;top:676.6px;width:29.5px;height:29.5px;background:#f9f9f9;border:1px solid #ececec;border-radius:4px"><svg width="29.5" height="29.5" viewBox="0 0 29.5 29.5" style="position:absolute;left:-1px;top:-1px"><path d="M5.2 5.1H18.2L24.1 9.6V24H5.2Z" fill="#f3f3f3" stroke="#c2c2c2" stroke-width="1"/><path d="M18.2 5.1V9.6H24.1" fill="none" stroke="#d5d5d5" stroke-width="0.9"/><path d="M10.4 11.5H18.6V17.2H10.4Z M7.9 11.9L10.6 14.35L7.9 16.8Z" fill="#c2c2c2"/><circle cx="19.9" cy="19.4" r="5.6" fill="#f1f1f1" stroke="#c6c6c6" stroke-width="1"/><circle cx="19.90" cy="16.10" r="1.4" fill="#b5b5b5"/><circle cx="23.04" cy="18.38" r="1.4" fill="#b5b5b5"/><circle cx="21.84" cy="22.07" r="1.4" fill="#b5b5b5"/><circle cx="17.96" cy="22.07" r="1.4" fill="#b5b5b5"/><circle cx="16.76" cy="18.38" r="1.4" fill="#b5b5b5"/></svg></div>
<div class="a c" style="left:708px;top:669.5px;width:98px;font-size:12px;line-height:44.200000000000045px;color:#333;letter-spacing:-0.1px">15-23</div>
<div class="a c" style="left:806px;top:669.5px;width:133.70000000000005px;font-size:12px;line-height:44.200000000000045px;color:#333">百家乐</div>
<div class="a c" style="left:939.7px;top:669.5px;width:83.29999999999995px;font-size:12px;line-height:44.200000000000045px;color:#333;letter-spacing:-0.1px">AS1</div>
<div class="a c" style="left:1023px;top:669.5px;width:152px;font-size:12px;line-height:44.200000000000045px;color:#333;letter-spacing:-0.1px"><span style="color:#0063ff">闲</span>(1) <span style="color:#f00">庄</span>(4)</div>
<div class="a c" style="left:1175px;top:669.5px;width:110px;font-size:12px;line-height:44.200000000000045px;color:#1c5fe6;letter-spacing:-0.1px">20.00</div>
<div class="a c" style="left:1285px;top:669.5px;width:134px;font-size:12px;line-height:44.200000000000045px;color:#333;letter-spacing:-0.1px">20.00</div>
<div class="a c" style="left:1419px;top:669.5px;width:109px;font-size:12px;line-height:44.200000000000045px;color:#333;letter-spacing:-0.1px">19.00</div>
<div class="a c" style="left:1528px;top:669.5px;width:379px;font-size:12px;line-height:44.200000000000045px;color:#333;letter-spacing:-0.1px">202.40/221.40</div>
<div class="a" style="left:13.8px;top:713.8px;width:1899px;height:61.90000000000009px;background:#999;border-bottom-left-radius:3px;box-shadow:0 1px 1.5px rgba(0,0,0,0.22)"></div>
<div class="a c" style="left:13.5px;top:713.8px;width:262.5px;font-size:12px;line-height:31.40000000000009px;color:#fff">小计</div>
<div class="a c" style="left:276px;top:713.8px;width:202px;font-size:12px;line-height:31.40000000000009px;color:#fff;letter-spacing:-0.1px">7</div>
<div class="a c" style="left:1175px;top:713.8px;width:110px;font-size:12px;line-height:31.40000000000009px;color:#fff;letter-spacing:-0.1px">220.00</div>
<div class="a c" style="left:1285px;top:713.8px;width:134px;font-size:12px;line-height:31.40000000000009px;color:#fff;letter-spacing:-0.1px">220.00</div>
<div class="a c" style="left:1419px;top:713.8px;width:109px;font-size:12px;line-height:31.40000000000009px;color:#f00;letter-spacing:-0.1px">-5.50</div>
<div class="a c" style="left:13.5px;top:746.0px;width:262.5px;font-size:12px;line-height:30.5px;color:#fff">总计</div>
<div class="a c" style="left:276px;top:746.0px;width:202px;font-size:12px;line-height:30.5px;color:#fff;letter-spacing:-0.1px">7</div>
<div class="a c" style="left:1175px;top:746.0px;width:110px;font-size:12px;line-height:30.5px;color:#fff;letter-spacing:-0.1px">220.00</div>
<div class="a c" style="left:1285px;top:746.0px;width:134px;font-size:12px;line-height:30.5px;color:#fff;letter-spacing:-0.1px">220.00</div>
<div class="a c" style="left:1419px;top:746.0px;width:109px;font-size:12px;line-height:30.5px;color:#f00;letter-spacing:-0.1px">-5.50</div>
<div class="a" style="left:13.8px;top:744px;width:1899px;height:2px;background:#e0e0e0"></div>
<div class="a" style="left:275px;top:713.8px;width:2px;height:61.90000000000009px;background:#dcdcdc"></div>
<div class="a" style="left:477px;top:713.8px;width:2px;height:61.90000000000009px;background:#dcdcdc"></div>
<div class="a" style="left:707px;top:713.8px;width:2px;height:61.90000000000009px;background:#dcdcdc"></div>
<div class="a" style="left:805px;top:713.8px;width:2px;height:61.90000000000009px;background:#dcdcdc"></div>
<div class="a" style="left:938.7px;top:713.8px;width:2px;height:61.90000000000009px;background:#dcdcdc"></div>
<div class="a" style="left:1022px;top:713.8px;width:2px;height:61.90000000000009px;background:#dcdcdc"></div>
<div class="a" style="left:1174px;top:713.8px;width:2px;height:61.90000000000009px;background:#dcdcdc"></div>
<div class="a" style="left:1284px;top:713.8px;width:2px;height:61.90000000000009px;background:#dcdcdc"></div>
<div class="a" style="left:1418px;top:713.8px;width:2px;height:61.90000000000009px;background:#dcdcdc"></div>
<div class="a" style="left:1527px;top:713.8px;width:2px;height:61.90000000000009px;background:#dcdcdc"></div></body></html>
